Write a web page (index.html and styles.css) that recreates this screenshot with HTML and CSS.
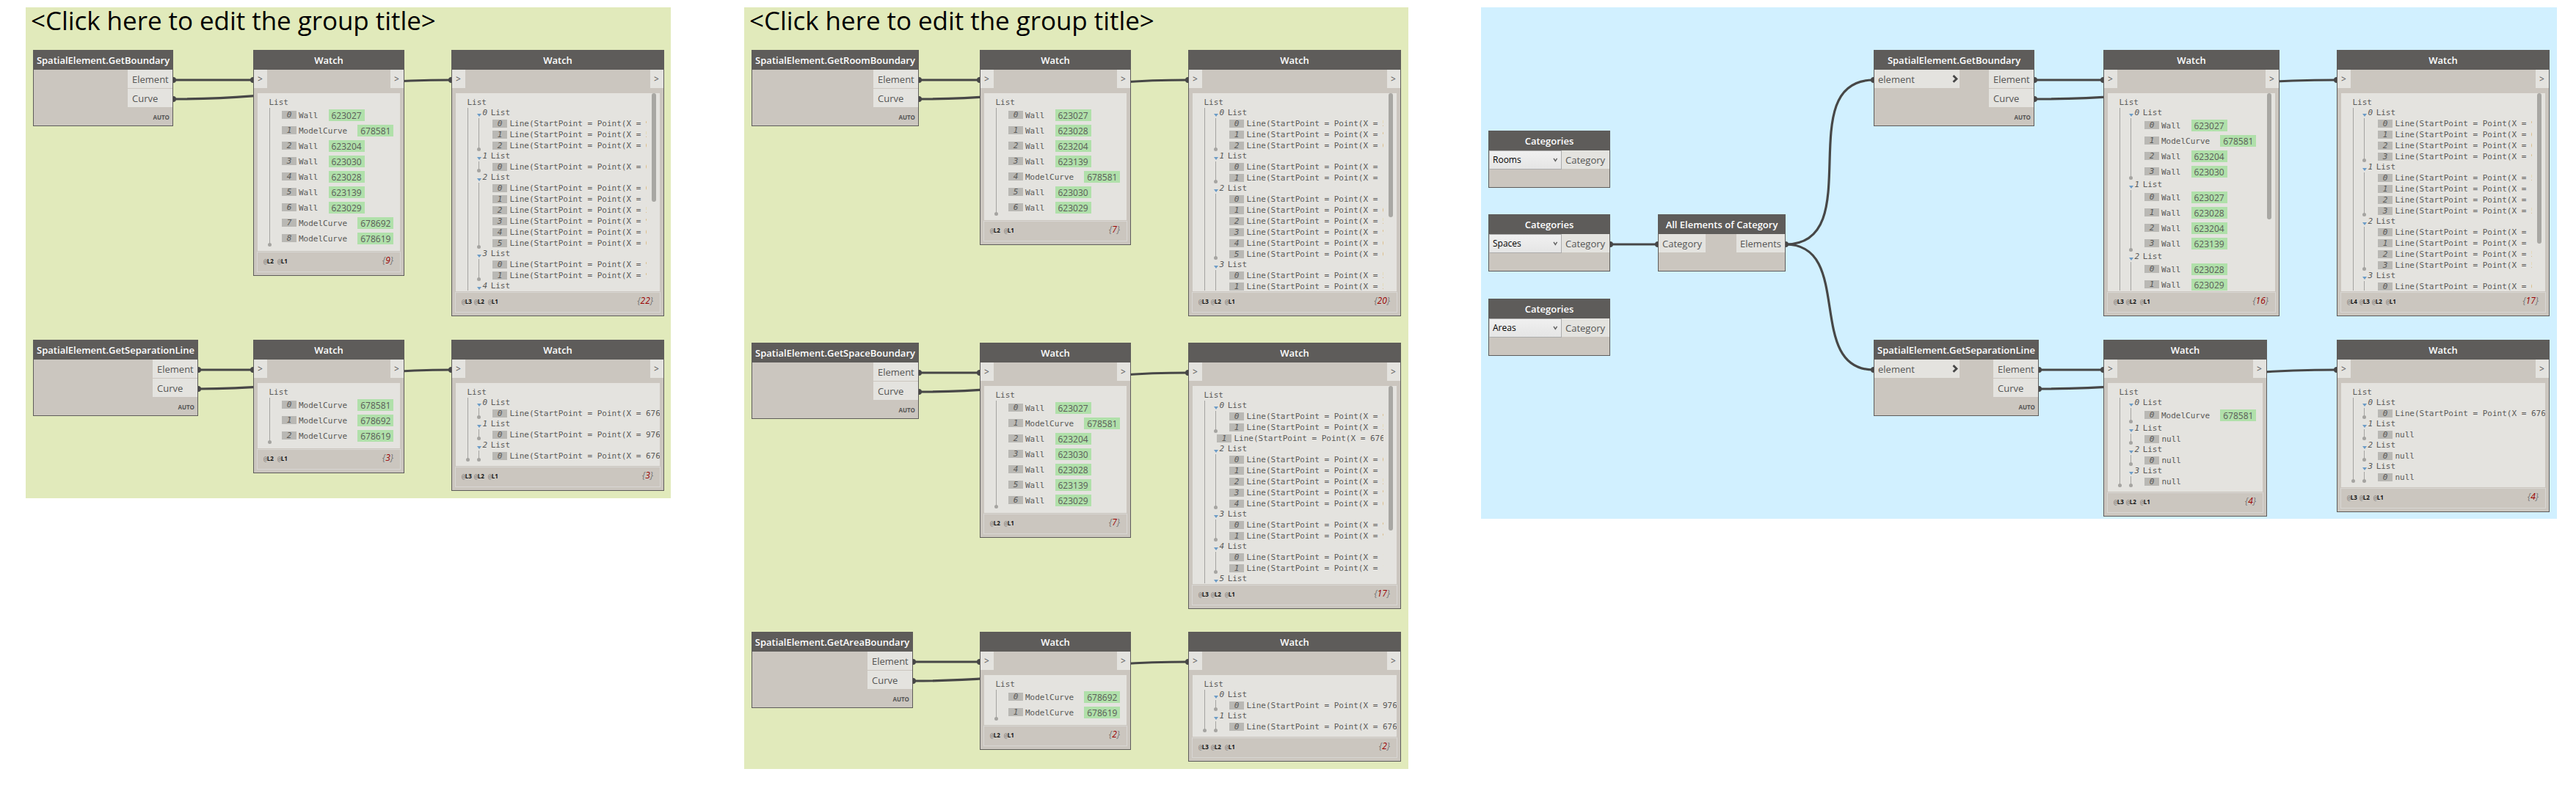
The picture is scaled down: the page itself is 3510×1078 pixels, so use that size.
FILE: index.html
```html
<!DOCTYPE html>
<html lang="en">
<head>
<meta charset="utf-8">
<title>Spatial element boundaries</title>
<link rel="stylesheet" href="styles.css">
</head>
<body>
<main class="canvas">

<section class="group group-a"><h2>&lt;Click here to edit the group title&gt;</h2></section>
<section class="group group-b"><h2>&lt;Click here to edit the group title&gt;</h2></section>
<section class="group group-c"></section>

<svg class="wires" width="3510" height="1078" viewBox="0 0 3510 1078">
  <g class="paths">
    <path d="M236 109H345M236 135C407 135 444 109 615 109"/>
    <path d="M270 504H345M270 530C425 530 460 504 615 504"/>
    <path d="M1252 109H1335M1252 135C1417 135 1454 109 1619 109"/>
    <path d="M1252 508H1335M1252 534C1417 534 1454 508 1619 508"/>
    <path d="M1244 902H1335M1244 928C1413 928 1450 902 1619 902"/>
    <path d="M2194 333H2259"/>
    <path d="M2433 333C2547 333 2439 109 2553 109"/>
    <path d="M2433 333C2527 333 2459 504 2553 504"/>
    <path d="M2772 109H2866M2772 135C2957 135 2999 109 3184 109"/>
    <path d="M2778 504H2866M2778 530C2961 530 3001 504 3184 504"/>
  </g>
  <g class="ends">
    <circle cx="236" cy="109" r="4"/><circle cx="345" cy="109" r="4"/><circle cx="236" cy="135" r="4"/><circle cx="615" cy="109" r="4"/>
    <circle cx="270" cy="504" r="4"/><circle cx="345" cy="504" r="4"/><circle cx="270" cy="530" r="4"/><circle cx="615" cy="504" r="4"/>
    <circle cx="1252" cy="109" r="4"/><circle cx="1335" cy="109" r="4"/><circle cx="1252" cy="135" r="4"/><circle cx="1619" cy="109" r="4"/>
    <circle cx="1252" cy="508" r="4"/><circle cx="1335" cy="508" r="4"/><circle cx="1252" cy="534" r="4"/><circle cx="1619" cy="508" r="4"/>
    <circle cx="1244" cy="902" r="4"/><circle cx="1335" cy="902" r="4"/><circle cx="1244" cy="928" r="4"/><circle cx="1619" cy="902" r="4"/>
    <circle cx="2194" cy="333" r="4"/><circle cx="2259" cy="333" r="4"/><circle cx="2433" cy="333" r="4"/><circle cx="2553" cy="109" r="4"/><circle cx="2553" cy="504" r="4"/>
    <circle cx="2772" cy="109" r="4"/><circle cx="2866" cy="109" r="4"/><circle cx="2772" cy="135" r="4"/><circle cx="3184" cy="109" r="4"/>
    <circle cx="2778" cy="504" r="4"/><circle cx="2866" cy="504" r="4"/><circle cx="2778" cy="530" r="4"/><circle cx="3184" cy="504" r="4"/>
  </g>
</svg>

<!-- First group -->
<article class="node func n-a1">
  <header>SpatialElement.GetBoundary</header>
  <div class="ports"><div class="outs"><span>Element</span><span>Curve</span></div></div>
  <footer>AUTO</footer>
</article>
<article class="node watch n-a2">
  <header>Watch</header>
  <div class="ports"><span class="io">&gt;</span><span class="io out">&gt;</span></div>
  <div class="view"><p class="root">List</p>
    <ul class="branch">
      <li class="leaf id"><i>0</i><span>Wall</span><b>623027</b></li>
      <li class="leaf id"><i>1</i><span>ModelCurve</span><b>678581</b></li>
      <li class="leaf id"><i>2</i><span>Wall</span><b>623204</b></li>
      <li class="leaf id"><i>3</i><span>Wall</span><b>623030</b></li>
      <li class="leaf id"><i>4</i><span>Wall</span><b>623028</b></li>
      <li class="leaf id"><i>5</i><span>Wall</span><b>623139</b></li>
      <li class="leaf id"><i>6</i><span>Wall</span><b>623029</b></li>
      <li class="leaf id"><i>7</i><span>ModelCurve</span><b>678692</b></li>
      <li class="leaf id"><i>8</i><span>ModelCurve</span><b>678619</b></li>
    </ul>
  </div>
  <div class="levels"><span>@<b>L2</b></span><span>@<b>L1</b></span><em>{<b>9</b>}</em></div>
</article>
<article class="node watch n-a3">
  <header>Watch</header>
  <div class="ports"><span class="io">&gt;</span><span class="io out">&gt;</span></div>
  <div class="view scroll"><p class="root">List</p>
    <ul class="branch">
      <li><p class="head"><i>0</i>List</p>
        <ul class="branch">
          <li class="leaf"><i>0</i><span>Line(StartPoint = Point(X = 9</span></li>
          <li class="leaf"><i>1</i><span>Line(StartPoint = Point(X = 5</span></li>
          <li class="leaf"><i>2</i><span>Line(StartPoint = Point(X = 6</span></li>
        </ul></li>
      <li><p class="head"><i>1</i>List</p>
        <ul class="branch">
          <li class="leaf"><i>0</i><span>Line(StartPoint = Point(X = 6</span></li>
        </ul></li>
      <li><p class="head"><i>2</i>List</p>
        <ul class="branch">
          <li class="leaf"><i>0</i><span>Line(StartPoint = Point(X = 6</span></li>
          <li class="leaf"><i>1</i><span>Line(StartPoint = Point(X = 1</span></li>
          <li class="leaf"><i>2</i><span>Line(StartPoint = Point(X = 5</span></li>
          <li class="leaf"><i>3</i><span>Line(StartPoint = Point(X = 9</span></li>
          <li class="leaf"><i>4</i><span>Line(StartPoint = Point(X = 6</span></li>
          <li class="leaf"><i>5</i><span>Line(StartPoint = Point(X = 6</span></li>
        </ul></li>
      <li><p class="head"><i>3</i>List</p>
        <ul class="branch">
          <li class="leaf"><i>0</i><span>Line(StartPoint = Point(X = 9</span></li>
          <li class="leaf"><i>1</i><span>Line(StartPoint = Point(X = 9</span></li>
        </ul></li>
      <li><p class="head"><i>4</i>List</p><p class="more"></p></li>
    </ul>
    <span class="thumb"></span>
  </div>
  <div class="levels"><span>@<b>L3</b></span><span>@<b>L2</b></span><span>@<b>L1</b></span><em>{<b>22</b>}</em></div>
</article>
<article class="node func n-a4">
  <header>SpatialElement.GetSeparationLine</header>
  <div class="ports"><div class="outs"><span>Element</span><span>Curve</span></div></div>
  <footer>AUTO</footer>
</article>
<article class="node watch n-a5">
  <header>Watch</header>
  <div class="ports"><span class="io">&gt;</span><span class="io out">&gt;</span></div>
  <div class="view"><p class="root">List</p>
    <ul class="branch">
      <li class="leaf id"><i>0</i><span>ModelCurve</span><b>678581</b></li>
      <li class="leaf id"><i>1</i><span>ModelCurve</span><b>678692</b></li>
      <li class="leaf id"><i>2</i><span>ModelCurve</span><b>678619</b></li>
    </ul>
  </div>
  <div class="levels"><span>@<b>L2</b></span><span>@<b>L1</b></span><em>{<b>3</b>}</em></div>
</article>
<article class="node watch n-a6">
  <header>Watch</header>
  <div class="ports"><span class="io">&gt;</span><span class="io out">&gt;</span></div>
  <div class="view"><p class="root">List</p>
    <ul class="branch">
      <li><p class="head"><i>0</i>List</p>
        <ul class="branch"><li class="leaf"><i>0</i><span>Line(StartPoint = Point(X = 676</span></li></ul></li>
      <li><p class="head"><i>1</i>List</p>
        <ul class="branch"><li class="leaf"><i>0</i><span>Line(StartPoint = Point(X = 976</span></li></ul></li>
      <li><p class="head"><i>2</i>List</p>
        <ul class="branch"><li class="leaf"><i>0</i><span>Line(StartPoint = Point(X = 676</span></li></ul></li>
    </ul>
  </div>
  <div class="levels"><span>@<b>L3</b></span><span>@<b>L2</b></span><span>@<b>L1</b></span><em>{<b>3</b>}</em></div>
</article>

<!-- Second group -->
<article class="node func n-b1">
  <header>SpatialElement.GetRoomBoundary</header>
  <div class="ports"><div class="outs"><span>Element</span><span>Curve</span></div></div>
  <footer>AUTO</footer>
</article>
<article class="node watch n-b2">
  <header>Watch</header>
  <div class="ports"><span class="io">&gt;</span><span class="io out">&gt;</span></div>
  <div class="view"><p class="root">List</p>
    <ul class="branch">
      <li class="leaf id"><i>0</i><span>Wall</span><b>623027</b></li>
      <li class="leaf id"><i>1</i><span>Wall</span><b>623028</b></li>
      <li class="leaf id"><i>2</i><span>Wall</span><b>623204</b></li>
      <li class="leaf id"><i>3</i><span>Wall</span><b>623139</b></li>
      <li class="leaf id"><i>4</i><span>ModelCurve</span><b>678581</b></li>
      <li class="leaf id"><i>5</i><span>Wall</span><b>623030</b></li>
      <li class="leaf id"><i>6</i><span>Wall</span><b>623029</b></li>
    </ul>
  </div>
  <div class="levels"><span>@<b>L2</b></span><span>@<b>L1</b></span><em>{<b>7</b>}</em></div>
</article>
<article class="node watch n-b3">
  <header>Watch</header>
  <div class="ports"><span class="io">&gt;</span><span class="io out">&gt;</span></div>
  <div class="view scroll"><p class="root">List</p>
    <ul class="branch">
      <li><p class="head"><i>0</i>List</p>
        <ul class="branch">
          <li class="leaf"><i>0</i><span>Line(StartPoint = Point(X = 5</span></li>
          <li class="leaf"><i>1</i><span>Line(StartPoint = Point(X = 9</span></li>
          <li class="leaf"><i>2</i><span>Line(StartPoint = Point(X = 6</span></li>
        </ul></li>
      <li><p class="head"><i>1</i>List</p>
        <ul class="branch">
          <li class="leaf"><i>0</i><span>Line(StartPoint = Point(X = 1</span></li>
          <li class="leaf"><i>1</i><span>Line(StartPoint = Point(X = 1</span></li>
        </ul></li>
      <li><p class="head"><i>2</i>List</p>
        <ul class="branch">
          <li class="leaf"><i>0</i><span>Line(StartPoint = Point(X = 1</span></li>
          <li class="leaf"><i>1</i><span>Line(StartPoint = Point(X = 6</span></li>
          <li class="leaf"><i>2</i><span>Line(StartPoint = Point(X = 5</span></li>
          <li class="leaf"><i>3</i><span>Line(StartPoint = Point(X = 9</span></li>
          <li class="leaf"><i>4</i><span>Line(StartPoint = Point(X = 6</span></li>
          <li class="leaf"><i>5</i><span>Line(StartPoint = Point(X = 6</span></li>
        </ul></li>
      <li><p class="head"><i>3</i>List</p>
        <ul class="branch">
          <li class="leaf"><i>0</i><span>Line(StartPoint = Point(X = 5</span></li>
          <li class="leaf"><i>1</i><span>Line(StartPoint = Point(X = 5</span></li>
          <li class="more"></li>
        </ul></li>
    </ul>
    <span class="thumb"></span>
  </div>
  <div class="levels"><span>@<b>L3</b></span><span>@<b>L2</b></span><span>@<b>L1</b></span><em>{<b>20</b>}</em></div>
</article>
<article class="node func n-b4">
  <header>SpatialElement.GetSpaceBoundary</header>
  <div class="ports"><div class="outs"><span>Element</span><span>Curve</span></div></div>
  <footer>AUTO</footer>
</article>
<article class="node watch n-b5">
  <header>Watch</header>
  <div class="ports"><span class="io">&gt;</span><span class="io out">&gt;</span></div>
  <div class="view"><p class="root">List</p>
    <ul class="branch">
      <li class="leaf id"><i>0</i><span>Wall</span><b>623027</b></li>
      <li class="leaf id"><i>1</i><span>ModelCurve</span><b>678581</b></li>
      <li class="leaf id"><i>2</i><span>Wall</span><b>623204</b></li>
      <li class="leaf id"><i>3</i><span>Wall</span><b>623030</b></li>
      <li class="leaf id"><i>4</i><span>Wall</span><b>623028</b></li>
      <li class="leaf id"><i>5</i><span>Wall</span><b>623139</b></li>
      <li class="leaf id"><i>6</i><span>Wall</span><b>623029</b></li>
    </ul>
  </div>
  <div class="levels"><span>@<b>L2</b></span><span>@<b>L1</b></span><em>{<b>7</b>}</em></div>
</article>
<article class="node watch n-b6">
  <header>Watch</header>
  <div class="ports"><span class="io">&gt;</span><span class="io out">&gt;</span></div>
  <div class="view scroll"><p class="root">List</p>
    <ul class="branch">
      <li><p class="head"><i>0</i>List</p>
        <ul class="branch">
          <li class="leaf"><i>0</i><span>Line(StartPoint = Point(X = 9</span></li>
          <li class="leaf"><i>1</i><span>Line(StartPoint = Point(X = 5</span></li>
        </ul></li>
      <li class="leaf"><i>1</i><span>Line(StartPoint = Point(X = 676</span></li>
      <li><p class="head"><i>2</i>List</p>
        <ul class="branch">
          <li class="leaf"><i>0</i><span>Line(StartPoint = Point(X = 6</span></li>
          <li class="leaf"><i>1</i><span>Line(StartPoint = Point(X = 1</span></li>
          <li class="leaf"><i>2</i><span>Line(StartPoint = Point(X = 5</span></li>
          <li class="leaf"><i>3</i><span>Line(StartPoint = Point(X = 9</span></li>
          <li class="leaf"><i>4</i><span>Line(StartPoint = Point(X = 6</span></li>
        </ul></li>
      <li><p class="head"><i>3</i>List</p>
        <ul class="branch">
          <li class="leaf"><i>0</i><span>Line(StartPoint = Point(X = 9</span></li>
          <li class="leaf"><i>1</i><span>Line(StartPoint = Point(X = 9</span></li>
        </ul></li>
      <li><p class="head"><i>4</i>List</p>
        <ul class="branch">
          <li class="leaf"><i>0</i><span>Line(StartPoint = Point(X = 1</span></li>
          <li class="leaf"><i>1</i><span>Line(StartPoint = Point(X = 1</span></li>
        </ul></li>
      <li><p class="head"><i>5</i>List</p><p class="more"></p></li>
    </ul>
    <span class="thumb"></span>
  </div>
  <div class="levels"><span>@<b>L3</b></span><span>@<b>L2</b></span><span>@<b>L1</b></span><em>{<b>17</b>}</em></div>
</article>
<article class="node func n-b7">
  <header>SpatialElement.GetAreaBoundary</header>
  <div class="ports"><div class="outs"><span>Element</span><span>Curve</span></div></div>
  <footer>AUTO</footer>
</article>
<article class="node watch n-b8">
  <header>Watch</header>
  <div class="ports"><span class="io">&gt;</span><span class="io out">&gt;</span></div>
  <div class="view"><p class="root">List</p>
    <ul class="branch">
      <li class="leaf id"><i>0</i><span>ModelCurve</span><b>678692</b></li>
      <li class="leaf id"><i>1</i><span>ModelCurve</span><b>678619</b></li>
    </ul>
  </div>
  <div class="levels"><span>@<b>L2</b></span><span>@<b>L1</b></span><em>{<b>2</b>}</em></div>
</article>
<article class="node watch n-b9">
  <header>Watch</header>
  <div class="ports"><span class="io">&gt;</span><span class="io out">&gt;</span></div>
  <div class="view"><p class="root">List</p>
    <ul class="branch">
      <li><p class="head"><i>0</i>List</p>
        <ul class="branch"><li class="leaf"><i>0</i><span>Line(StartPoint = Point(X = 976</span></li></ul></li>
      <li><p class="head"><i>1</i>List</p>
        <ul class="branch"><li class="leaf"><i>0</i><span>Line(StartPoint = Point(X = 676</span></li></ul></li>
    </ul>
  </div>
  <div class="levels"><span>@<b>L3</b></span><span>@<b>L2</b></span><span>@<b>L1</b></span><em>{<b>2</b>}</em></div>
</article>

<!-- Third group -->
<article class="node pick n-c1">
  <header>Categories</header>
  <div class="ports"><span class="select">Rooms<svg width="7" height="6" viewBox="0 0 7 6"><path d="M1 .8 3.3 4.4 5.6 .8"/></svg></span><span class="port">Category</span></div>
</article>
<article class="node pick n-c2">
  <header>Categories</header>
  <div class="ports"><span class="select">Spaces<svg width="7" height="6" viewBox="0 0 7 6"><path d="M1 .8 3.3 4.4 5.6 .8"/></svg></span><span class="port">Category</span></div>
</article>
<article class="node pick n-c3">
  <header>Categories</header>
  <div class="ports"><span class="select">Areas<svg width="7" height="6" viewBox="0 0 7 6"><path d="M1 .8 3.3 4.4 5.6 .8"/></svg></span><span class="port">Category</span></div>
</article>
<article class="node pick n-c4">
  <header>All Elements of Category</header>
  <div class="ports"><span class="port">Category</span><span class="port">Elements</span></div>
</article>
<article class="node func n-c5">
  <header>SpatialElement.GetBoundary</header>
  <div class="ports"><span class="port in">element<svg width="9" height="11" viewBox="0 0 9 11"><path d="M1.5 1 6 5.4 1.5 9.8"/></svg></span><div class="outs"><span>Element</span><span>Curve</span></div></div>
  <footer>AUTO</footer>
</article>
<article class="node watch n-c6">
  <header>Watch</header>
  <div class="ports"><span class="io">&gt;</span><span class="io out">&gt;</span></div>
  <div class="view scroll"><p class="root">List</p>
    <ul class="branch">
      <li><p class="head"><i>0</i>List</p>
        <ul class="branch">
          <li class="leaf id"><i>0</i><span>Wall</span><b>623027</b></li>
          <li class="leaf id"><i>1</i><span>ModelCurve</span><b>678581</b></li>
          <li class="leaf id"><i>2</i><span>Wall</span><b>623204</b></li>
          <li class="leaf id"><i>3</i><span>Wall</span><b>623030</b></li>
        </ul></li>
      <li><p class="head"><i>1</i>List</p>
        <ul class="branch">
          <li class="leaf id"><i>0</i><span>Wall</span><b>623027</b></li>
          <li class="leaf id"><i>1</i><span>Wall</span><b>623028</b></li>
          <li class="leaf id"><i>2</i><span>Wall</span><b>623204</b></li>
          <li class="leaf id"><i>3</i><span>Wall</span><b>623139</b></li>
        </ul></li>
      <li><p class="head"><i>2</i>List</p>
        <ul class="branch">
          <li class="leaf id"><i>0</i><span>Wall</span><b>623028</b></li>
          <li class="leaf id"><i>1</i><span>Wall</span><b>623029</b></li>
          <li class="more"></li>
        </ul></li>
    </ul>
    <span class="thumb"></span>
  </div>
  <div class="levels"><span>@<b>L3</b></span><span>@<b>L2</b></span><span>@<b>L1</b></span><em>{<b>16</b>}</em></div>
</article>
<article class="node watch n-c7">
  <header>Watch</header>
  <div class="ports"><span class="io">&gt;</span><span class="io out">&gt;</span></div>
  <div class="view scroll"><p class="root">List</p>
    <ul class="branch">
      <li><p class="head"><i>0</i>List</p>
        <ul class="branch">
          <li class="leaf"><i>0</i><span>Line(StartPoint = Point(X = 9</span></li>
          <li class="leaf"><i>1</i><span>Line(StartPoint = Point(X = 6</span></li>
          <li class="leaf"><i>2</i><span>Line(StartPoint = Point(X = 6</span></li>
          <li class="leaf"><i>3</i><span>Line(StartPoint = Point(X = 9</span></li>
        </ul></li>
      <li><p class="head"><i>1</i>List</p>
        <ul class="branch">
          <li class="leaf"><i>0</i><span>Line(StartPoint = Point(X = 5</span></li>
          <li class="leaf"><i>1</i><span>Line(StartPoint = Point(X = 1</span></li>
          <li class="leaf"><i>2</i><span>Line(StartPoint = Point(X = 1</span></li>
          <li class="leaf"><i>3</i><span>Line(StartPoint = Point(X = 5</span></li>
        </ul></li>
      <li><p class="head"><i>2</i>List</p>
        <ul class="branch">
          <li class="leaf"><i>0</i><span>Line(StartPoint = Point(X = 1</span></li>
          <li class="leaf"><i>1</i><span>Line(StartPoint = Point(X = 1</span></li>
          <li class="leaf"><i>2</i><span>Line(StartPoint = Point(X = 5</span></li>
          <li class="leaf"><i>3</i><span>Line(StartPoint = Point(X = 5</span></li>
        </ul></li>
      <li><p class="head"><i>3</i>List</p>
        <ul class="branch">
          <li class="leaf"><i>0</i><span>Line(StartPoint = Point(X = 6</span></li>
          <li class="more"></li>
        </ul></li>
    </ul>
    <span class="thumb"></span>
  </div>
  <div class="levels"><span>@<b>L4</b></span><span>@<b>L3</b></span><span>@<b>L2</b></span><span>@<b>L1</b></span><em>{<b>17</b>}</em></div>
</article>
<article class="node func n-c8">
  <header>SpatialElement.GetSeparationLine</header>
  <div class="ports"><span class="port in">element<svg width="9" height="11" viewBox="0 0 9 11"><path d="M1.5 1 6 5.4 1.5 9.8"/></svg></span><div class="outs"><span>Element</span><span>Curve</span></div></div>
  <footer>AUTO</footer>
</article>
<article class="node watch n-c9">
  <header>Watch</header>
  <div class="ports"><span class="io">&gt;</span><span class="io out">&gt;</span></div>
  <div class="view"><p class="root">List</p>
    <ul class="branch">
      <li><p class="head"><i>0</i>List</p>
        <ul class="branch"><li class="leaf id"><i>0</i><span>ModelCurve</span><b>678581</b></li></ul></li>
      <li><p class="head"><i>1</i>List</p>
        <ul class="branch"><li class="leaf"><i>0</i><span>null</span></li></ul></li>
      <li><p class="head"><i>2</i>List</p>
        <ul class="branch"><li class="leaf"><i>0</i><span>null</span></li></ul></li>
      <li><p class="head"><i>3</i>List</p>
        <ul class="branch"><li class="leaf"><i>0</i><span>null</span></li></ul></li>
    </ul>
  </div>
  <div class="levels"><span>@<b>L3</b></span><span>@<b>L2</b></span><span>@<b>L1</b></span><em>{<b>4</b>}</em></div>
</article>
<article class="node watch n-c10">
  <header>Watch</header>
  <div class="ports"><span class="io">&gt;</span><span class="io out">&gt;</span></div>
  <div class="view"><p class="root">List</p>
    <ul class="branch">
      <li><p class="head"><i>0</i>List</p>
        <ul class="branch"><li class="leaf"><i>0</i><span>Line(StartPoint = Point(X = 676</span></li></ul></li>
      <li><p class="head"><i>1</i>List</p>
        <ul class="branch"><li class="leaf"><i>0</i><span>null</span></li></ul></li>
      <li><p class="head"><i>2</i>List</p>
        <ul class="branch"><li class="leaf"><i>0</i><span>null</span></li></ul></li>
      <li><p class="head"><i>3</i>List</p>
        <ul class="branch"><li class="leaf"><i>0</i><span>null</span></li></ul></li>
    </ul>
  </div>
  <div class="levels"><span>@<b>L3</b></span><span>@<b>L2</b></span><span>@<b>L1</b></span><em>{<b>4</b>}</em></div>
</article>

</main>
</body>
</html>
```
FILE: styles.css
```css
* { box-sizing: border-box; }
body { margin: 0; background: #fff; font-family: "Open Sans", sans-serif; color: #555; }
h2, p, ul { margin: 0; padding: 0; }
ul { list-style: none; }

.canvas { position: relative; width: 3510px; height: 1078px; overflow: hidden; }

/* Groups */
.group { position: absolute; top: 10px; background: #e1eabb; }
.group h2 { padding-left: 7px; font-size: 35px; line-height: 36px; font-weight: 400; color: #000; white-space: nowrap; letter-spacing: -.05px; }
.group-a { left: 35px; width: 879px; height: 669px; }
.group-b { left: 1014px; width: 905px; height: 1038px; }
.group-c { left: 2018px; width: 1466px; height: 697px; background: #d1f0ff; }

/* Connectors */
.wires { position: absolute; left: 0; top: 0; }
.paths { fill: none; stroke: #474747; stroke-width: 3.2; }
.ends { fill: #474747; }

/* Nodes */
.node { position: absolute; border: 1px solid #5e5c5a; background: #cbc6bf; }
.node header { height: 26px; line-height: 26px; background: #5e5c5a; color: #fff; font-size: 13px; font-weight: 600; text-align: center; white-space: nowrap; }
.ports { display: flex; justify-content: space-between; align-items: flex-start; font-size: 13px; line-height: 26px; }
.outs { margin-left: auto; display: flex; flex-direction: column; gap: 1px; }
.outs span, .port, .io { display: block; height: 25px; background: #e4e3df; white-space: nowrap; }
.outs span { width: 61px; padding-left: 6px; }
.port { padding: 0 5px; }
.port.in { display: flex; justify-content: space-between; align-items: center; width: 116px; padding-right: 1px; }
.port.in svg { margin-top: -1px; fill: none; stroke: #474747; stroke-width: 2.8; }
.io { width: 18px; padding-left: 5px; font-size: 12px; line-height: 25px; }
.func { height: 104px; }
.func footer { height: 25px; padding-right: 4px; line-height: 27px; font-size: 8px; font-weight: 700; text-align: right; }
.pick { height: 78px; }
.select { display: flex; justify-content: space-between; align-items: center; width: 99px; height: 26px; padding: 0 4px 1px 4px; border: 1px solid #acacac; border-left-color: #d0d0d0; background: linear-gradient(#f0f0f0, #e5e5e5); color: #000; font-size: 12px; line-height: 22px; }
.select svg { fill: none; stroke: #606060; stroke-width: 1.4; }
.pick .select + .port { width: 65px; }

/* Watch content */
.view { position: relative; margin: 7px 5px 0; padding: 6px 0 5px; border-bottom: 1px solid #e4e3df; background: #e4e3df; color: #5a5a58; overflow: hidden; font-family: "DejaVu Sans Mono", monospace; font-size: 11px; }
.scroll { height: 270px; padding-right: 18px; }
.scroll > .branch { height: 249px; overflow: hidden; }
.root { padding-left: 15.5px; height: 14px; line-height: 14px; }
.branch { position: relative; margin-left: 15px; padding-left: 1px; }
.branch::before { content: ""; position: absolute; left: 1px; top: 0; bottom: 2px; width: 1px; background: #a5a4a1; }
.branch::after { content: ""; position: absolute; left: -1px; bottom: 0; width: 5px; height: 5px; border-radius: 50%; background: #a5a4a1; }
.scroll > .branch::before { bottom: 0; }
.scroll > .branch::after { display: none; }
.branch .branch { margin-left: 14px; }
.head { position: relative; height: 14px; padding-left: 20.5px; line-height: 14px; }
.head::before { content: ""; position: absolute; left: 13px; top: 8px; border: 3.5px solid transparent; border-top: 4px solid #6b9bc6; border-bottom: 0; }
.head i { margin-right: 4.5px; }
.leaf { display: flex; align-items: flex-start; height: 15px; padding-left: 17px; line-height: 15px; }
.branch .branch .leaf { padding-left: 19px; }
.leaf span { white-space: pre; flex: none; }
.leaf i { flex: none; width: 20px; height: 11px; margin: 2px 3.5px 0 0; background: #b9b8b4; line-height: 11px; text-align: center; }
.leaf b { height: 16px; margin: 2px 0 0 14px; padding: 0 4px; background: #b0e0aa; font: 400 12px/17px "Open Sans", sans-serif; }
.leaf.id { height: 21px; }
.leaf.id span { margin-top: 3px; }
.leaf.id i { margin: 4px 3px 0 0; }
.more { height: 30px; }
.thumb { position: absolute; right: 5px; top: 0; width: 6px; height: 148px; border-radius: 3px; background: #a8a7a3; }

.levels { display: flex; align-items: center; height: 28px; margin: 1px 4px 4px; padding: 0 9px 4px 8px; border: 1px solid #d8d6d3; font-size: 8px; color: #777; }
.levels span { width: 17px; white-space: nowrap; font: 8px "DejaVu Sans Mono", monospace; }
.levels span:nth-last-child(2) { margin-left: 2px; }
.levels span b { color: #111; font: 700 8px "Open Sans", sans-serif; }
.levels em { margin-left: auto; font-size: 12px; line-height: 22px; }
.levels em b { color: #9a0000; font-weight: 400; }

/* Places on the canvas */
.n-a1 { left: 45px; top: 68px; width: 191px; }
.n-a2 { left: 345px; top: 68px; width: 206px; }
.n-a3 { left: 615px; top: 68px; width: 290px; }
.n-a4 { left: 45px; top: 463px; width: 225px; }
.n-a5 { left: 345px; top: 463px; width: 206px; }
.n-a6 { left: 615px; top: 463px; width: 290px; }
.n-b1 { left: 1024px; top: 68px; width: 228px; }
.n-b2 { left: 1335px; top: 68px; width: 206px; }
.n-b3 { left: 1619px; top: 68px; width: 290px; }
.n-b4 { left: 1024px; top: 467px; width: 228px; }
.n-b5 { left: 1335px; top: 467px; width: 206px; }
.n-b6 { left: 1619px; top: 467px; width: 290px; }
.n-b7 { left: 1024px; top: 861px; width: 220px; }
.n-b8 { left: 1335px; top: 861px; width: 206px; }
.n-b9 { left: 1619px; top: 861px; width: 290px; }
.n-c1 { left: 2028px; top: 178px; width: 166px; }
.n-c2 { left: 2028px; top: 292px; width: 166px; }
.n-c3 { left: 2028px; top: 407px; width: 166px; }
.n-c4 { left: 2259px; top: 292px; width: 174px; }
.n-c5 { left: 2553px; top: 68px; width: 219px; }
.n-c6 { left: 2866px; top: 68px; width: 240px; }
.n-c7 { left: 3184px; top: 68px; width: 290px; }
.n-c8 { left: 2553px; top: 463px; width: 225px; }
.n-c9 { left: 2866px; top: 463px; width: 223px; }
.n-c10 { left: 3184px; top: 463px; width: 290px; }
.n-b3 .thumb { height: 169px; }
.n-b6 .thumb { height: 197px; }
.n-c6 .thumb { height: 172px; }
.n-c7 .thumb { height: 205px; }
```
